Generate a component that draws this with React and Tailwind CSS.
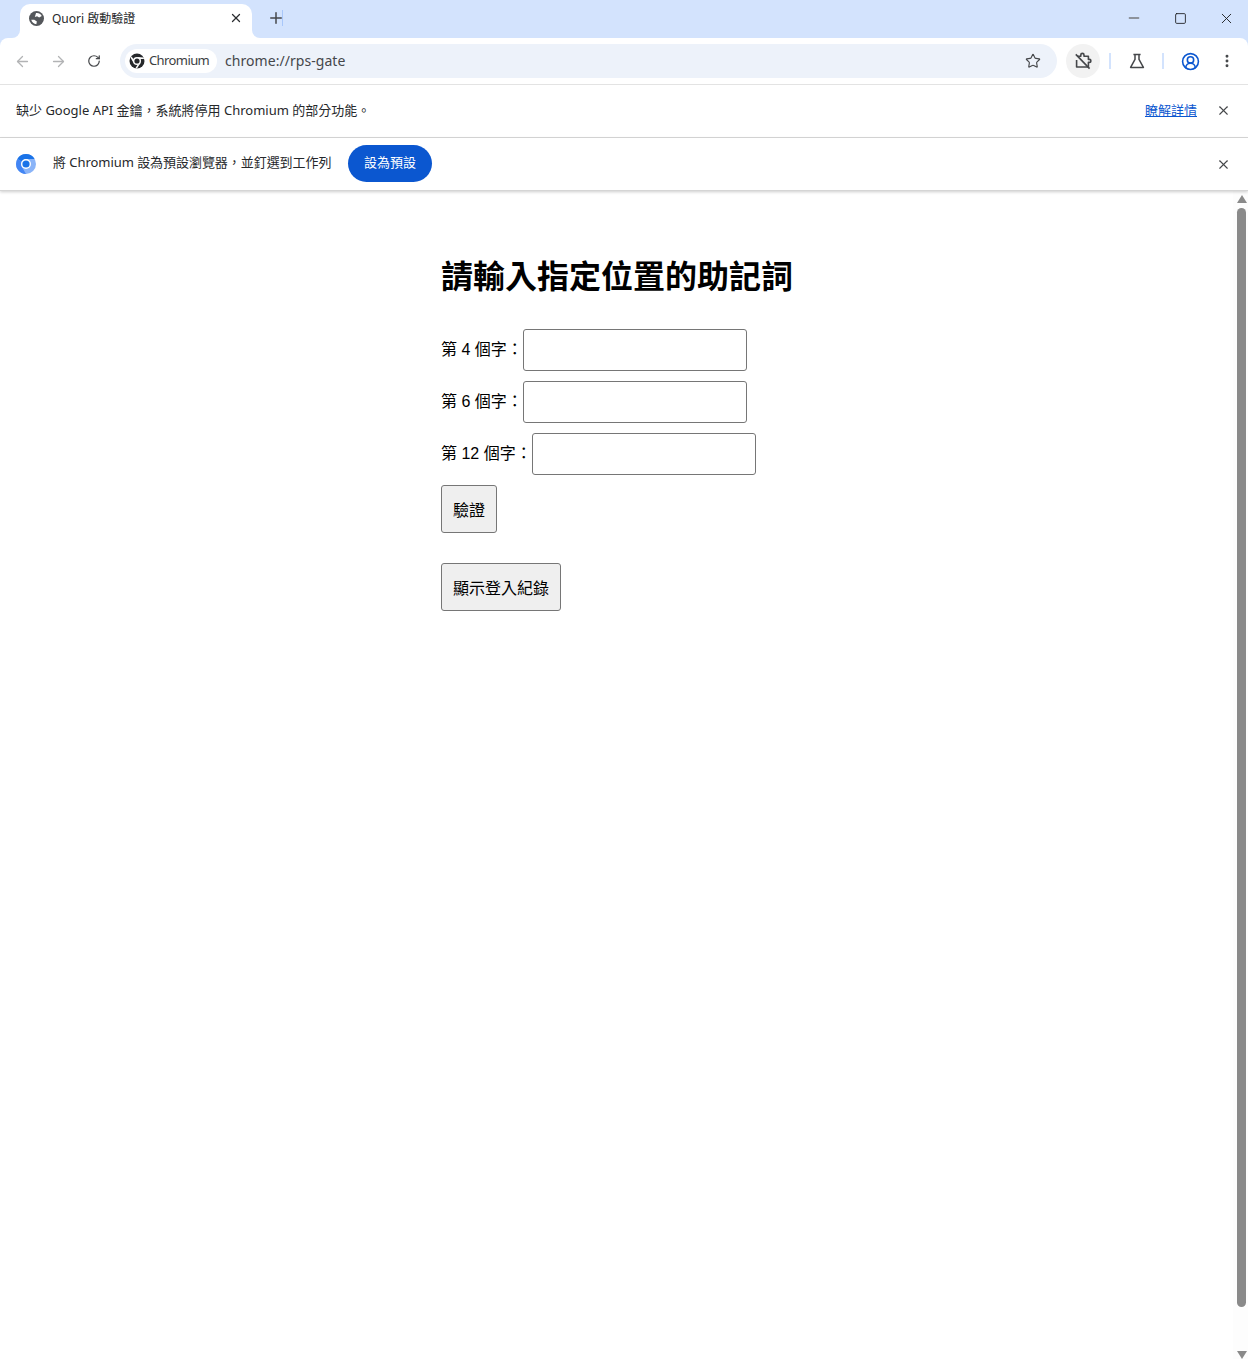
import { X, Minus, Square, ArrowLeft, ArrowRight, RotateCw, Star, EllipsisVertical, Plus, CircleUserRound } from "lucide-react";

const FONT = "[font-family:'Liberation_Sans','Noto_Sans_CJK_TC',sans-serif]";
const UI_FONT = "[font-family:'Noto_Sans','Noto_Sans_CJK_TC',sans-serif]";

function GlobeIcon() {
  return (
    <svg width="15" height="15" viewBox="0 0 16 16" className="shrink-0">
      <circle cx="8" cy="8" r="8" fill="#54575b" />
      <path d="M7.5 2.2 C10 1.8 12.6 3 13.6 5.2 L10.8 6.8 L8.6 5.6 L6.2 6.4 Z M2.4 9.4 L5.6 9.2 L8.4 11.2 L7.8 14 C5.2 13.8 3 12 2.4 9.4 Z" fill="#fff" />
    </svg>
  );
}

function ChromiumMono() {
  return (
    <svg width="16" height="16" viewBox="0 0 16 16" className="shrink-0">
      <circle cx="8" cy="8" r="7.5" fill="#26282b" />
      <circle cx="8" cy="8" r="4" fill="#fff" />
      <circle cx="8" cy="8" r="2.6" fill="#26282b" />
      <path d="M8 4 L14.6 4.4 L15 6 L11.4 6 Z M4.6 10 L1.6 4.8 L2.6 3.4 L5 7 Z M11.4 10 L8 15.4 L6.4 15.2 L8.4 12 Z" fill="#fff" />
    </svg>
  );
}

function ChromiumColor() {
  return (
    <svg width="20" height="20" viewBox="0 0 20 20" className="shrink-0">
      <circle cx="10" cy="10" r="10" fill="#8ab4f8" />
      <path d="M10 0 A10 10 0 0 1 18.66 5 L10 5 A5 5 0 0 0 5.67 7.5 L1.34 5 A10 10 0 0 1 10 0 Z" fill="#1a73e8" />
      <path d="M1.34 5 L5.67 7.5 A5 5 0 0 0 5.67 12.5 L10 20 A10 10 0 0 1 1.34 5 Z" fill="#4285f4" />
      <circle cx="10" cy="10" r="5" fill="#fff" />
      <circle cx="10" cy="10" r="3.6" fill="#1a73e8" />
    </svg>
  );
}

function ExtensionOffIcon() {
  return (
    <svg width="18" height="18" viewBox="0 0 18 18" fill="none" stroke="#45474a" strokeWidth="1.6" strokeLinejoin="round" className="shrink-0">
      <path d="M3 4.2 H6.8 V3 A1.6 1.6 0 0 1 10 3 V4.2 H14.4 V7.4 H15.4 A1.5 1.5 0 0 1 15.4 10.4 H14.4 V15 H2.6 V11.4 H3.4 M2.6 11.4 V8" />
      <path d="M1.8 2.4 L15.6 16.6" />
    </svg>
  );
}

function FlaskIcon() {
  return (
    <svg width="16" height="16" viewBox="0 0 16 16" fill="none" stroke="#45474a" strokeWidth="1.5" strokeLinejoin="round" className="shrink-0">
      <path d="M4.4 1.4 H11.6 M6 1.4 V6.4 L1.6 14.4 H14.4 L10 6.4 V1.4" />
    </svg>
  );
}

function ChromeBar() {
  return (
    <div className={`${UI_FONT} shrink-0`}>
      {/* tab strip */}
      <div className="flex h-[38px] items-end bg-[#d3e3fd] pl-5">
        <div className="relative flex h-[34px] w-[232px] items-center rounded-t-[10px] bg-white pb-[6px] pl-[9px] pr-[9px]">
          <span className="absolute bottom-0 left-[-8px] h-2 w-2 bg-white">
            <span className="block h-2 w-2 rounded-br-[8px] bg-[#d3e3fd]" />
          </span>
          <span className="absolute bottom-0 right-[-8px] h-2 w-2 bg-white">
            <span className="block h-2 w-2 rounded-bl-[8px] bg-[#d3e3fd]" />
          </span>
          <GlobeIcon />
          <span className="ml-2 flex-1 pt-px text-xs text-[#26282b]">Quori 啟動驗證</span>
          <X size={14} strokeWidth={2.2} className="text-[#2b2d30]" />
        </div>
        <div className="ml-[15px] flex h-[34px] items-center pb-[6px]">
          <Plus size={18} strokeWidth={2} className="text-[#45474a]" />
          <span className="-ml-[3px] h-4 w-px bg-[#a8c7fa]" />
        </div>
        <div className="ml-auto flex h-[34px] items-start">
          <span className="flex h-7 w-[44px] items-center justify-center">
            <Minus size={16} strokeWidth={2} className="text-[#76787c]" />
          </span>
          <span className="flex h-7 w-[48px] items-center justify-center">
            <Square size={13} strokeWidth={1.6} className="text-[#1c1d1f]" />
          </span>
          <span className="flex h-7 w-[44px] items-center justify-center">
            <X size={17} strokeWidth={1.3} className="text-[#1c1d1f]" />
          </span>
        </div>
      </div>

      {/* toolbar */}
      <div className="bg-[#d3e3fd]">
        <div className="flex h-[47px] items-center rounded-t-[8px] border-b border-[#e3e3e3] bg-white pl-[4px]">
          <span className="flex w-9 justify-center"><ArrowLeft size={17} strokeWidth={1.8} className="text-[#b2b3b5]" /></span>
          <span className="flex w-9 justify-center"><ArrowRight size={17} strokeWidth={1.8} className="text-[#b2b3b5]" /></span>
          <span className="flex w-9 justify-center"><RotateCw size={14} strokeWidth={2.1} className="text-[#45474a]" /></span>
          <div className="ml-2 flex h-[34px] w-[937px] items-center rounded-full bg-[#edf2fa] pl-[5px] pr-[16px]">
            <span className="flex h-6 w-[92px] items-center rounded-full bg-white pl-[4px]">
              <ChromiumMono />
              <span className="ml-[4px] text-[13px] tracking-[-0.6px] text-[#3c3e42]">Chromium</span>
            </span>
            <span className="ml-2 flex-1 text-sm tracking-[0.05px] text-[#45474a]">chrome://rps-gate</span>
            <Star size={16} strokeWidth={1.7} className="text-[#45474a]" />
          </div>
          <span className="ml-[9px] flex h-[34px] w-[34px] items-center justify-center rounded-full bg-[#f2f2f2]">
            <ExtensionOffIcon />
          </span>
          <span className="ml-[9px] h-4 w-0.5 bg-[#d3e3fd]" />
          <span className="ml-[18px] flex w-4 justify-center"><FlaskIcon /></span>
          <span className="ml-[17px] h-4 w-0.5 bg-[#d3e3fd]" />
          <span className="ml-[18px] flex w-4 justify-center"><CircleUserRound size={19} strokeWidth={2} className="shrink-0 text-[#0b57d0]" /></span>
          <span className="ml-[21px] flex w-4 justify-center"><EllipsisVertical size={18} strokeWidth={2.4} className="text-[#45474a]" /></span>
        </div>
      </div>

      {/* missing API keys bar */}
      <div className="flex h-[53px] items-center border-b border-[#d9d9d9] bg-white pb-px pl-4 pr-[18px] text-[13px] text-[#26282b]">
        <span className="flex-1">缺少 Google API 金鑰，系統將停用 Chromium 的部分功能。</span>
        <a className="mr-[19px] text-[#0b57d0] underline">瞭解詳情</a>
        <X size={15} strokeWidth={1.8} className="mr-[-1px] text-[#45474a]" />
      </div>

      {/* default browser bar */}
      <div className="relative flex h-[53px] items-center border-b border-[#d5d5d5] bg-white pl-4 pr-[17px] text-[13px] text-[#26282b] shadow-[0_1px_3px_rgba(0,0,0,0.2)]">
        <ChromiumColor />
        <span className="mb-[2px] ml-[17px] w-[295px] whitespace-nowrap tracking-[-0.05px]">將 Chromium 設為預設瀏覽器，並釘選到工作列</span>
        <span className="mb-[2px] flex h-[37px] w-[84px] items-center justify-center rounded-full bg-[#0b57d0] text-white">設為預設</span>
        <X size={15} strokeWidth={1.8} className="ml-auto text-[#45474a]" />
      </div>
    </div>
  );
}

function WordField({ label }) {
  return (
    <div className="mb-[10px] flex items-center">
      <label className="text-base text-black">{label}</label>
      <input type="text" className="h-[42px] w-[224px] rounded-[3px] border border-[#767676] bg-white p-[10px] text-base" />
    </div>
  );
}

function GateButton({ children, className = "" }) {
  return (
    <button className={`block h-12 rounded-[3px] border border-[#767676] bg-[#efefef] px-[11px] pt-1 text-base text-black ${className}`}>
      {children}
    </button>
  );
}

function Scrollbar() {
  return (
    <div className="flex w-[15px] shrink-0 flex-col items-center bg-[#fdfdfd] pl-[2px]">
      <svg width="10" height="8" viewBox="0 0 10 8" className="mt-1 shrink-0"><path d="M5 0 L10 8 H0 Z" fill="#8a8a8a" /></svg>
      <div className="mt-[5px] h-[1099px] w-[9px] rounded-full bg-[#8a8a8a]" />
      <svg width="10" height="8" viewBox="0 0 10 8" className="mt-auto shrink-0"><path d="M0 0 H10 L5 8 Z" fill="#8a8a8a" /></svg>
    </div>
  );
}

export default function App() {
  return (
    <div className={`${FONT} flex h-[1359px] w-[1248px] flex-col overflow-hidden bg-white`}>
      <ChromeBar />
      <div className="flex min-h-0 flex-1">
        <main className="flex flex-1 justify-center">
          <div className="w-[351px] pt-[68px]">
            <h1 className="mb-[33px] whitespace-nowrap text-[32px] font-bold leading-[37px] text-black">請輸入指定位置的助記詞</h1>
            <WordField label="第 4 個字：" />
            <WordField label="第 6 個字：" />
            <WordField label="第 12 個字：" />
            <GateButton>驗證</GateButton>
            <GateButton className="mt-[30px]">顯示登入紀錄</GateButton>
          </div>
        </main>
        <Scrollbar />
      </div>
    </div>
  );
}
